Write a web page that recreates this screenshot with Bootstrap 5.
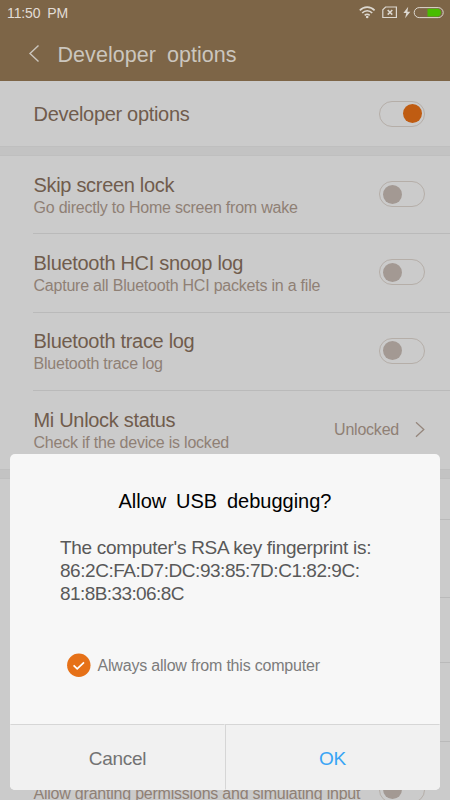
<!DOCTYPE html>
<html lang="en">
<head>
<meta charset="utf-8">
<meta name="viewport" content="width=device-width, initial-scale=1">
<title>Developer options</title>
<link href="https://cdn.jsdelivr.net/npm/bootstrap@5.3.0/dist/css/bootstrap.min.css" rel="stylesheet">
<style>
  body { font-family: "Liberation Sans", Arial, sans-serif; background: #cbcbcb; }
  .screen { width: 450px; height: 800px; background: #cbcbcb; color: #705c4d; }
  .topbar { height: 81px; background: #7d6547; color: #cbc6be; }
  .statusbar { height: 26px; padding: 0 5px 0 7px; }
  .clock { font-size: 14px; line-height: 26px; color: #e2ddd6; letter-spacing: -.1px; word-spacing: 3px; }
  .titlebar { height: 55px; padding: 1px 0 0 28px; }
  .page-title { font-size: 21.5px; line-height: 54px; letter-spacing: .05px; word-spacing: 5px; margin-left: 17.5px; padding-top: 1px; }
  .setting { height: 78.25px; margin-left: 33px; padding-right: 25px; border-bottom: 1px solid #bababa; }
  .setting-master { height: 65px; }
  .setting-last { border-bottom: 0; }
  .setting-short { height: 65.5px; }
  .setting-tall { height: 98px; }
  .setting-tall .labels { padding-bottom: 18px; }
  .section-gap { height: 10px; background: #c3c3c3; border-top: 1px solid #bfbfbf; border-bottom: 1px solid #bfbfbf; }
  .section-label { height: 40.5px; }
  .labels { padding-top: 2px; }
  .name { font-size: 20px; line-height: 24px; letter-spacing: -.31px; padding-left: .5px; }
  .note { font-size: 16px; line-height: 22px; letter-spacing: -.22px; padding-left: .5px; color: #8f8075; }
  .toggle { width: 46px; height: 26px; padding: 2.5px; border: 1px solid #b5aea8; border-radius: 13px; }
  .labels + .toggle { margin-bottom: 1px; }
  .knob { width: 19px; height: 19px; border-radius: 50%; background: #a39993; }
  .toggle-on .knob { background: #bf5c12; }
  .sheet { left: 10px; top: 454px; width: 430px; height: 336px; border-radius: 5px; background: #f7f7f7; }
  .sheet-body { height: 270px; padding: 35px 50px 0; }
  .sheet-title { font-size: 20px; line-height: 24px; color: #000; word-spacing: 4.2px; }
  .sheet-text { font-size: 19px; line-height: 23px; letter-spacing: -.3px; color: #595959; margin-top: 23px; }
  .hex { letter-spacing: -.46px; }
  .hex-tail { letter-spacing: -.58px; }
  .always { font-size: 16px; letter-spacing: -.2px; color: #7c7c7c; margin: 46px 0 0 7px; }
  .always span { margin-left: 6.5px; padding-top: 3px; }
  .sheet-btn { height: 66px; padding-top: 10px; font-size: 19px; letter-spacing: -.3px; color: #737373; background: #f1f1f1; border-top: 1px solid #d6d6d6; border-radius: 0; }
  .sheet-btn + .sheet-btn { color: #3aa5f5; border-left: 1px solid #d6d6d6; }
</style>
</head>
<body>
<div class="screen position-relative overflow-hidden">
  <header class="topbar">
    <div class="statusbar d-flex align-items-center justify-content-between">
      <span class="clock">11:50 PM</span>
      <svg width="87" height="16" viewBox="0 0 87 16" fill="none" stroke="#ddd8d0">
        <g stroke-width="1.6"><path d="M1.800 5.400a10 10 0 0 1 14.800 0M4.200 8a6.700 6.700 0 0 1 10 0M6.700 10.400a3.700 3.700 0 0 1 5 0"/></g>
        <circle cx="9.200" cy="12" r="1.300" fill="#ddd8d0" stroke="none"/>
        <path d="M27.600 2H38.400v10.500H24.800V4.800z" stroke-width="1.200"/>
        <path d="M29.700 5l4.600 4.600m0-4.600l-4.600 4.600" stroke-width="1.500"/>
        <path d="M50.200 1.800l-4.800 6.300h2.900l-1.200 5.200 5.200-6.600h-2.900z" fill="#ddd8d0" stroke="none"/>
        <rect x="56.200" y="2.600" width="29" height="10" rx="5" stroke-width="1"/>
        <path d="M69.500 3.700h11a4.300 4.300 0 0 1 0 7.800h-11z" fill="#48bd00" stroke="none"/>
      </svg>
    </div>
    <div class="titlebar d-flex align-items-center">
      <svg width="12" height="18" viewBox="0 0 12 18" fill="none" stroke="#cbc6be" stroke-width="1.4"><path d="M10.500 0.500L2 8.500l8.500 8"/></svg>
      <span class="page-title">Developer options</span>
    </div>
  </header>
  <main>
    <div class="setting setting-master setting-last d-flex align-items-center justify-content-between">
      <span class="name">Developer options</span>
      <span class="toggle toggle-on d-flex align-items-center justify-content-end"><span class="knob"></span></span>
    </div>
    <div class="section-gap"></div>
    <div class="setting d-flex align-items-center justify-content-between">
      <div class="labels"><div class="name">Skip screen lock</div><div class="note">Go directly to Home screen from wake</div></div>
      <span class="toggle d-flex align-items-center"><span class="knob"></span></span>
    </div>
    <div class="setting d-flex align-items-center justify-content-between">
      <div class="labels"><div class="name">Bluetooth HCI snoop log</div><div class="note">Capture all Bluetooth HCI packets in a file</div></div>
      <span class="toggle d-flex align-items-center"><span class="knob"></span></span>
    </div>
    <div class="setting d-flex align-items-center justify-content-between">
      <div class="labels"><div class="name">Bluetooth trace log</div><div class="note">Bluetooth trace log</div></div>
      <span class="toggle d-flex align-items-center"><span class="knob"></span></span>
    </div>
    <div class="setting setting-last d-flex align-items-center justify-content-between">
      <div class="labels"><div class="name">Mi Unlock status</div><div class="note">Check if the device is locked</div></div>
      <div class="d-flex align-items-center"><span class="note me-3">Unlocked</span>
      <svg width="10" height="16" viewBox="0 0 10 16" fill="none" stroke="#95867c" stroke-width="1.300"><path d="M1 .3L8.800 7.500 1 14.700"/></svg></div>
    </div>
    <div class="section-gap"></div>
    <div class="setting section-label"></div>
    <div class="setting"></div>
    <div class="setting setting-short"></div>
    <div class="setting"></div>
    <div class="setting setting-tall d-flex align-items-center justify-content-between">
      <div class="labels"><div class="name">&nbsp;</div><div class="note">Allow granting permissions and simulating input</div></div>
      <span class="toggle d-flex align-items-center"><span class="knob"></span></span>
    </div>
  </main>
  <section class="sheet position-absolute overflow-hidden">
    <div class="sheet-body">
      <h1 class="sheet-title text-center fw-normal mb-0">Allow USB debugging?</h1>
      <p class="sheet-text mb-0 text-nowrap">The computer's RSA key fingerprint is:<br><span class="hex">86:2C:FA:D7:DC:93:85:7D:C1:82:9C:</span><br><span class="hex-tail">81:8B:33:06:8C</span></p>
      <div class="always d-flex align-items-center">
        <svg width="24" height="24" viewBox="0 0 24 24"><circle cx="11.800" cy="12.200" r="11.700" fill="#e67118"/><path d="M6.600 12.300l3.600 3.600 6.800-6.600" fill="none" stroke="#fff" stroke-width="1.700"/></svg>
        <span>Always allow from this computer</span>
      </div>
    </div>
    <div class="row g-0">
      <button class="sheet-btn btn col-6">Cancel</button>
      <button class="sheet-btn btn col-6">OK</button>
    </div>
  </section>
</div>
<script src="https://cdn.jsdelivr.net/npm/bootstrap@5.3.0/dist/js/bootstrap.bundle.min.js"></script>
</body>
</html>
